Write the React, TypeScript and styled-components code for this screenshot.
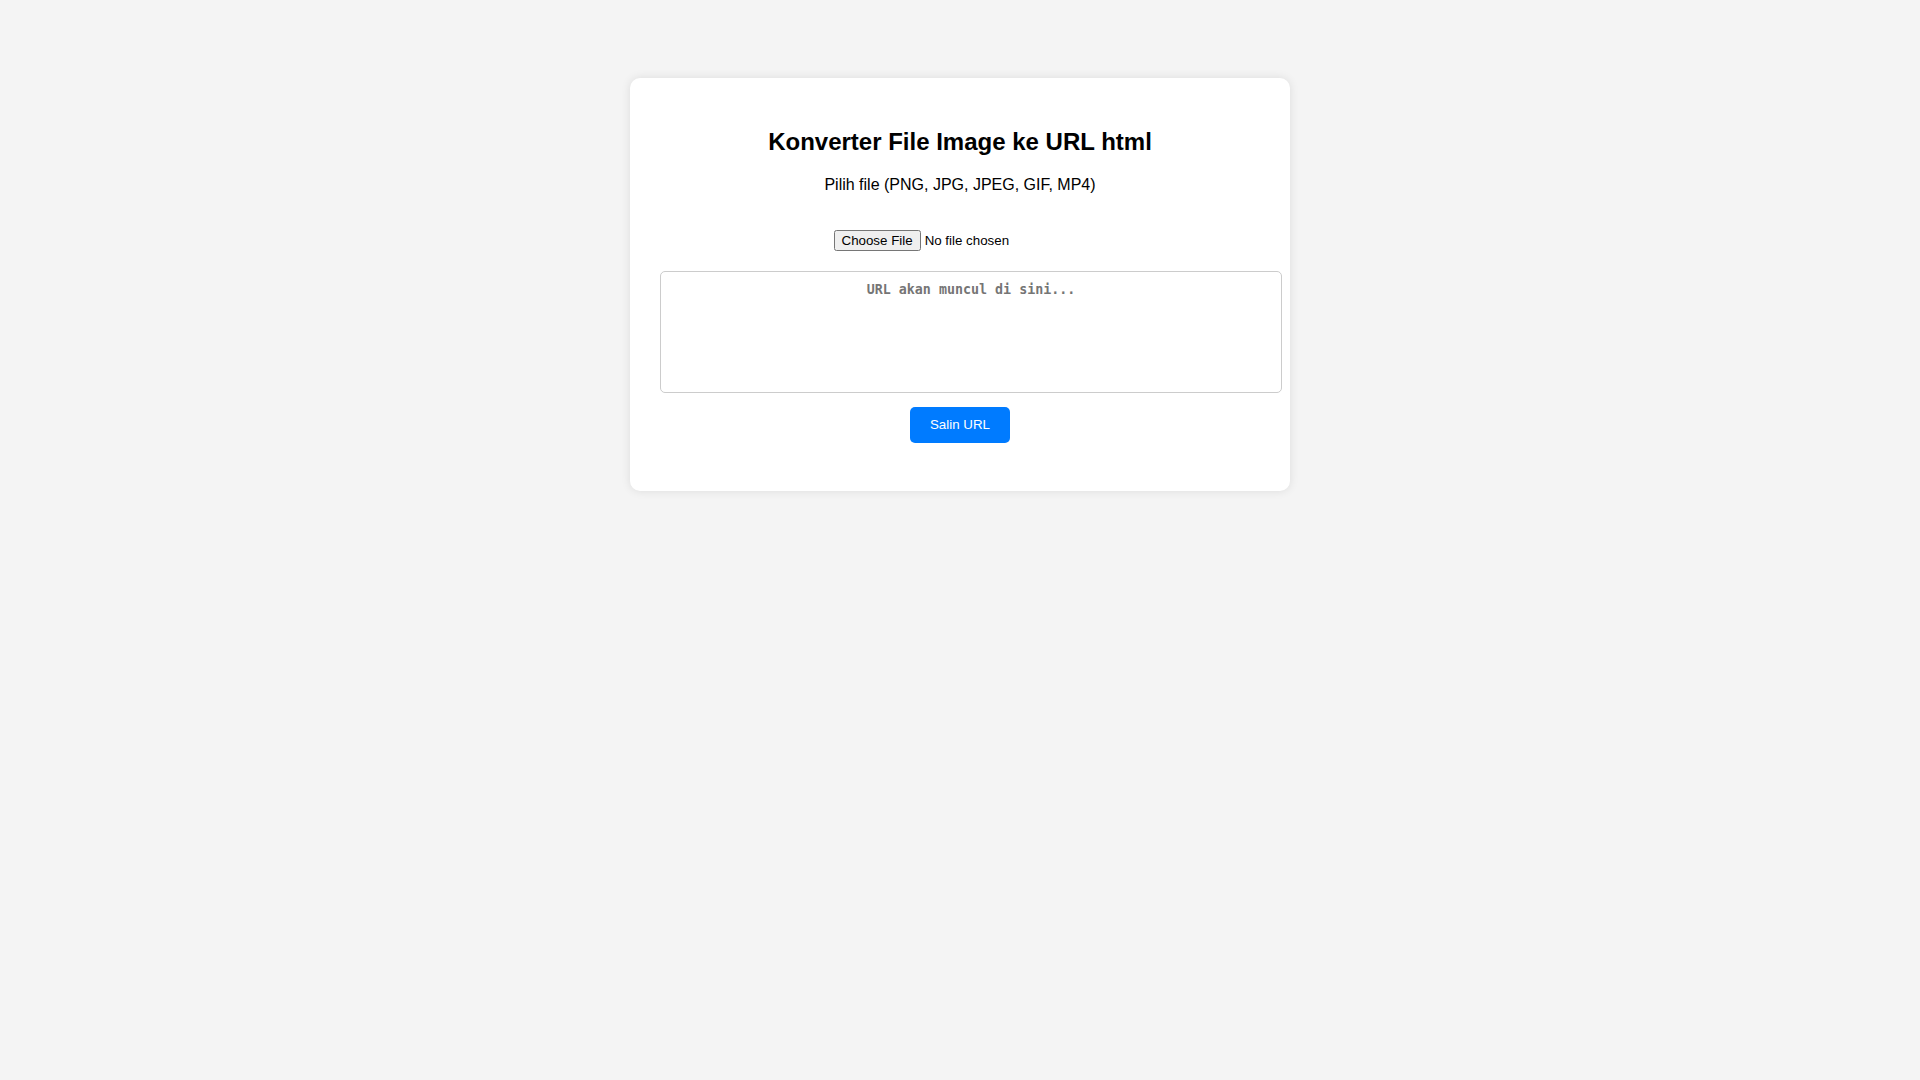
import React from "react";
import styled, { createGlobalStyle } from "styled-components";

const GlobalStyle = createGlobalStyle`
  html, body {
    margin: 0;
    padding: 0;
    background: #f4f4f4;
    font-family: "Liberation Sans", Arial, sans-serif;
    color: #000;
  }
`;

const Page = styled.div`
  min-height: 1080px;
  padding-top: 78px;
  box-sizing: border-box;
`;

const Card = styled.div`
  width: 600px;
  margin: 0 auto;
  padding: 30px;
  background: #fff;
  border-radius: 10px;
  box-shadow: 0 0 10px rgba(0, 0, 0, 0.1);
  text-align: center;
`;

const Title = styled.h2`
  margin: 20px 0 0;
  font-size: 24px;
  line-height: 28px;
  font-weight: bold;
`;

const Subtitle = styled.p`
  margin: 20px 0 0;
  font-size: 16px;
  line-height: 18px;
`;

const FileRow = styled.div`
  margin-top: 36px;
  height: 21px;
  display: flex;
  justify-content: center;
`;

const FileInput = styled.input`
  font-family: "Liberation Sans", Arial, sans-serif;
  font-size: 13.33px;
`;

const UrlBox = styled.textarea`
  display: block;
  width: 600px;
  height: 100px;
  margin: 20px 0 0;
  padding: 10px;
  border: 1px solid #ccc;
  border-radius: 5px;
  resize: none;
  font-family: "DejaVu Sans Mono", monospace;
  font-size: 13.33px;
  font-weight: bold;
  text-align: center;
  outline: none;
  &::placeholder {
    color: #757575;
  }
`;

const CopyButton = styled.button`
  display: block;
  margin: 14px auto 18px;
  padding: 10px 20px;
  border: none;
  border-radius: 5px;
  background: #007bff;
  color: #fff;
  font-family: "Liberation Sans", Arial, sans-serif;
  font-size: 13.33px;
  line-height: 16px;
  cursor: pointer;
`;

export default function App() {
  return (
    <>
      <GlobalStyle />
      <Page>
        <Card>
          <Title>Konverter File Image ke URL html</Title>
          <Subtitle>Pilih file (PNG, JPG, JPEG, GIF, MP4)</Subtitle>
          <FileRow>
            <FileInput type="file" accept=".png,.jpg,.jpeg,.gif,.mp4" />
          </FileRow>
          <UrlBox readOnly placeholder="URL akan muncul di sini..." />
          <CopyButton>Salin URL</CopyButton>
        </Card>
      </Page>
    </>
  );
}
